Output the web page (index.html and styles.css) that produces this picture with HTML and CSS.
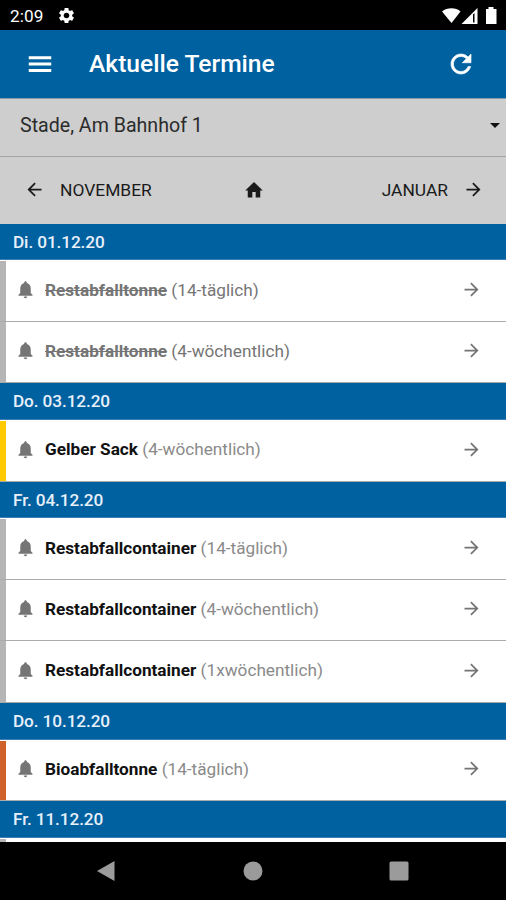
FILE: index.html
```html
<!DOCTYPE html>
<html lang="de">
<head>
    <meta charset="UTF-8">
    <meta name="viewport" content="width=device-width, initial-scale=1.0">
    <title>Aktuelle Termine</title>
    <link rel="stylesheet" href="styles.css">
</head>
<body>
    <svg class="icon-defs" aria-hidden="true">
        <symbol id="bell" viewBox="0 0 24 24">
            <path d="M12 22c1.1 0 2-.9 2-2h-4c0 1.100.9 2 2 2zm6-6v-5c0-3.070-1.640-5.640-4.500-6.320V4c0-.83-.67-1.500-1.500-1.500s-1.500.67-1.500 1.500v.68C7.630 5.360 6 7.920 6 11v5l-2 2v1h16v-1l-2-2z"/>
        </symbol>
        <symbol id="arrow-right" viewBox="0 0 24 24">
            <path d="M12 4l-1.410 1.410L16.170 11H4v2h12.170l-5.580 5.590L12 20l8-8z"/>
        </symbol>
        <symbol id="arrow-left" viewBox="0 0 24 24">
            <path d="M20 11H7.830l5.590-5.590L12 4l-8 8 8 8 1.410-1.410L7.830 13H20v-2z"/>
        </symbol>
    </svg>

    <div class="status-bar">
        <span class="clock">2:09</span>
        <svg class="gear" viewBox="0 0 24 24"><path d="M19.140 12.940c.04-.3.06-.61.06-.94 0-.32-.02-.64-.07-.94l2.030-1.580c.18-.14.23-.41.12-.61l-1.920-3.320c-.12-.22-.37-.29-.59-.22l-2.390.96c-.5-.38-1.030-.7-1.620-.94l-.36-2.540c-.04-.24-.24-.41-.48-.41h-3.840c-.24 0-.43.17-.47.41l-.36 2.540c-.59.24-1.130.57-1.620.94l-2.390-.96c-.22-.08-.47 0-.59.22L2.740 8.870c-.12.21-.08.47.12.61l2.030 1.580c-.05.3-.09.63-.09.94s.02.64.07.94l-2.030 1.580c-.18.14-.23.41-.12.61l1.920 3.320c.12.22.37.29.59.22l2.390-.96c.5.38 1.030.7 1.620.94l.36 2.540c.05.24.24.41.48.41h3.840c.24 0 .44-.17.47-.41l.36-2.540c.59-.24 1.130-.56 1.620-.94l2.390.96c.22.08.47 0 .59-.22l1.920-3.320c.12-.22.07-.47-.12-.61l-2.010-1.580zM12 15.600c-1.980 0-3.600-1.620-3.600-3.600s1.620-3.600 3.600-3.600 3.600 1.620 3.600 3.600-1.620 3.600-3.600 3.600z"/></svg>
        <svg class="signals" viewBox="0 0 56 18">
            <path d="M0 4.500C5 .2 14 .2 18.500 4.500L9.500 16z"/>
            <path d="M35.500 1v16H19.500zM31 7.500v8h1.500V6z" fill-rule="evenodd"/>
            <path d="M46.500 0h5v2H54.500v15H44V2h2.500z"/>
        </svg>
    </div>

    <header class="app-bar">
        <svg class="bar-icon" viewBox="0 0 24 24"><path d="M3 18.300h18v-2.300H3v2.300zm0-5.150h18v-2.300H3v2.300zm0-7.350v2.300h18V5.800H3z"/></svg>
        <h1>Aktuelle Termine</h1>
        <svg class="bar-icon refresh" viewBox="0 0 24 24"><path d="M17.650 6.350C16.200 4.900 14.210 4 12 4c-4.420 0-7.990 3.580-7.990 8s3.570 8 7.990 8c3.730 0 6.840-2.550 7.730-6h-2.080c-.82 2.330-3.040 4-5.650 4-3.310 0-6-2.690-6-6s2.690-6 6-6c1.660 0 3.140.69 4.220 1.780L13 11h7V4l-2.350 2.350z"/></svg>
    </header>

    <div class="location">
        <span>Stade, Am Bahnhof 1</span>
        <svg class="caret" viewBox="0 0 10 5"><path d="M0 0l5 5 5-5z"/></svg>
    </div>

    <nav class="months">
        <a class="month"><svg class="icon"><use href="#arrow-left"/></svg>November</a>
        <svg class="home" viewBox="0 0 24 24"><path d="M10 21v-6.500h4V21h5.500v-8.500H22.500L12 2.500 1.500 12.500h3V21z"/></svg>
        <a class="month next">Januar<svg class="icon"><use href="#arrow-right"/></svg></a>
    </nav>

    <main class="dates">
        <h2>Di. 01.12.20</h2>
        <ul>
            <li class="done"><svg class="icon"><use href="#bell"/></svg><p><b>Restabfalltonne</b> (14-täglich)</p><svg class="icon"><use href="#arrow-right"/></svg></li>
            <li class="done"><svg class="icon"><use href="#bell"/></svg><p><b>Restabfalltonne</b> (4-wöchentlich)</p><svg class="icon"><use href="#arrow-right"/></svg></li>
        </ul>
        <h2>Do. 03.12.20</h2>
        <ul class="yellow">
            <li><svg class="icon"><use href="#bell"/></svg><p><b>Gelber Sack</b> (4-wöchentlich)</p><svg class="icon"><use href="#arrow-right"/></svg></li>
        </ul>
        <h2>Fr. 04.12.20</h2>
        <ul>
            <li><svg class="icon"><use href="#bell"/></svg><p><b>Restabfallcontainer</b> (14-täglich)</p><svg class="icon"><use href="#arrow-right"/></svg></li>
            <li><svg class="icon"><use href="#bell"/></svg><p><b>Restabfallcontainer</b> (4-wöchentlich)</p><svg class="icon"><use href="#arrow-right"/></svg></li>
            <li><svg class="icon"><use href="#bell"/></svg><p><b>Restabfallcontainer</b> (1xwöchentlich)</p><svg class="icon"><use href="#arrow-right"/></svg></li>
        </ul>
        <h2>Do. 10.12.20</h2>
        <ul class="brown">
            <li><svg class="icon"><use href="#bell"/></svg><p><b>Bioabfalltonne</b> (14-täglich)</p><svg class="icon"><use href="#arrow-right"/></svg></li>
        </ul>
        <h2>Fr. 11.12.20</h2>
        <ul>
            <li></li>
        </ul>
    </main>

    <footer class="nav-bar">
        <svg viewBox="0 0 20 22"><path d="M18.500 1v20L1 11z"/></svg>
        <svg viewBox="0 0 20 22"><circle cx="10" cy="11" r="9.500"/></svg>
        <svg viewBox="0 0 20 22"><rect x="0.500" y="1.500" width="19" height="19" rx="1.500"/></svg>
    </footer>
</body>
</html>
```
FILE: styles.css
```css
* {
    margin: 0;
    padding: 0;
    box-sizing: border-box;
}

body {
    font-family: Roboto, sans-serif;
    font-size: 17.2px;
    width: 506px;
    height: 900px;
    display: flex;
    flex-direction: column;
    overflow: hidden;
    background-color: #fff;
}

svg {
    display: block;
    flex-shrink: 0;
    fill: currentColor;
}

.icon-defs {
    display: none;
}

.icon {
    width: 21px;
    height: 21px;
}

.status-bar {
    flex: 0 0 29.5px;
    display: flex;
    align-items: center;
    padding: 2px 8px 0 10px;
    background: #000;
    color: #fff;
}

.clock {
    letter-spacing: 0.1px;
}

.gear {
    width: 19px;
    height: 19px;
    margin-left: 13px;
}

.signals {
    width: 56px;
    height: 18px;
    margin-left: auto;
}

.app-bar {
    flex: 0 0 69.5px;
    display: flex;
    align-items: center;
    padding: 0 30px 0 25px;
    background: #0061a1;
    color: #fff;
    border-bottom: 1px solid #8a9aa8;
}

.app-bar h1 {
    flex: 1;
    margin-left: 34px;
    font-size: 24.6px;
    font-weight: 500;
}

.bar-icon {
    width: 30px;
    height: 30px;
}

.refresh {
    stroke: currentColor;
    stroke-width: 0.5;
}

.location {
    flex: 0 0 57.5px;
    display: flex;
    justify-content: space-between;
    align-items: center;
    padding: 0 6px 4px 20px;
    background: #cecece;
    border-bottom: 1px solid #a3a3a3;
    color: #2b2b2b;
    font-size: 19.6px;
}

.caret {
    width: 10px;
    height: 5px;
    color: #111;
}

.months {
    flex: 0 0 67px;
    display: grid;
    grid-template-columns: 1fr 20px 1fr;
    align-items: center;
    padding: 0 22px 1px 24px;
    background: #cecece;
    color: #1a1a1a;
    font-size: 17.4px;
}

.month {
    display: flex;
    align-items: center;
    gap: 15px;
    text-transform: uppercase;
}

.next {
    justify-content: flex-end;
}

.home {
    width: 20px;
    height: 20px;
}

.dates {
    flex: 1;
    min-height: 0;
    overflow: hidden;
}

.dates h2 {
    height: 36.8px;
    padding-left: 13px;
    background: #0061a1;
    border-bottom: 1px solid #3f7db5;
    color: #e8f0fa;
    font-size: 17.2px;
    font-weight: 500;
    letter-spacing: -0.1px;
    line-height: 37px;
}

.dates ul {
    list-style: none;
    padding-top: 1px;
    background: linear-gradient(#b5b5b5, #b5b5b5) 0 1px / 6px 100% no-repeat;
}

.dates .yellow {
    background-image: linear-gradient(#ffcb00, #ffcb00);
}

.dates .brown {
    background-image: linear-gradient(#cf622b, #cf622b);
}

.dates li {
    display: flex;
    align-items: center;
    height: 61.5px;
    padding: 0 24px 3px 15px;
    border-bottom: 1px solid #ababab;
    color: #757575;
}

.dates li:first-child {
    height: 60.5px;
}

.dates p {
    flex: 1;
    margin-left: 9px;
    color: #8a8a8a;
}

.dates b {
    color: #111;
    font-weight: 700;
}

.done p {
    color: #757575;
}

.done b {
    color: #757575;
    text-decoration: line-through;
}

.nav-bar {
    flex: 0 0 58px;
    display: flex;
    justify-content: space-between;
    align-items: center;
    padding: 0 97px 0 96px;
    background: #000;
    color: #9b9b9b;
}

.nav-bar svg {
    width: 20px;
    height: 22px;
}
```
